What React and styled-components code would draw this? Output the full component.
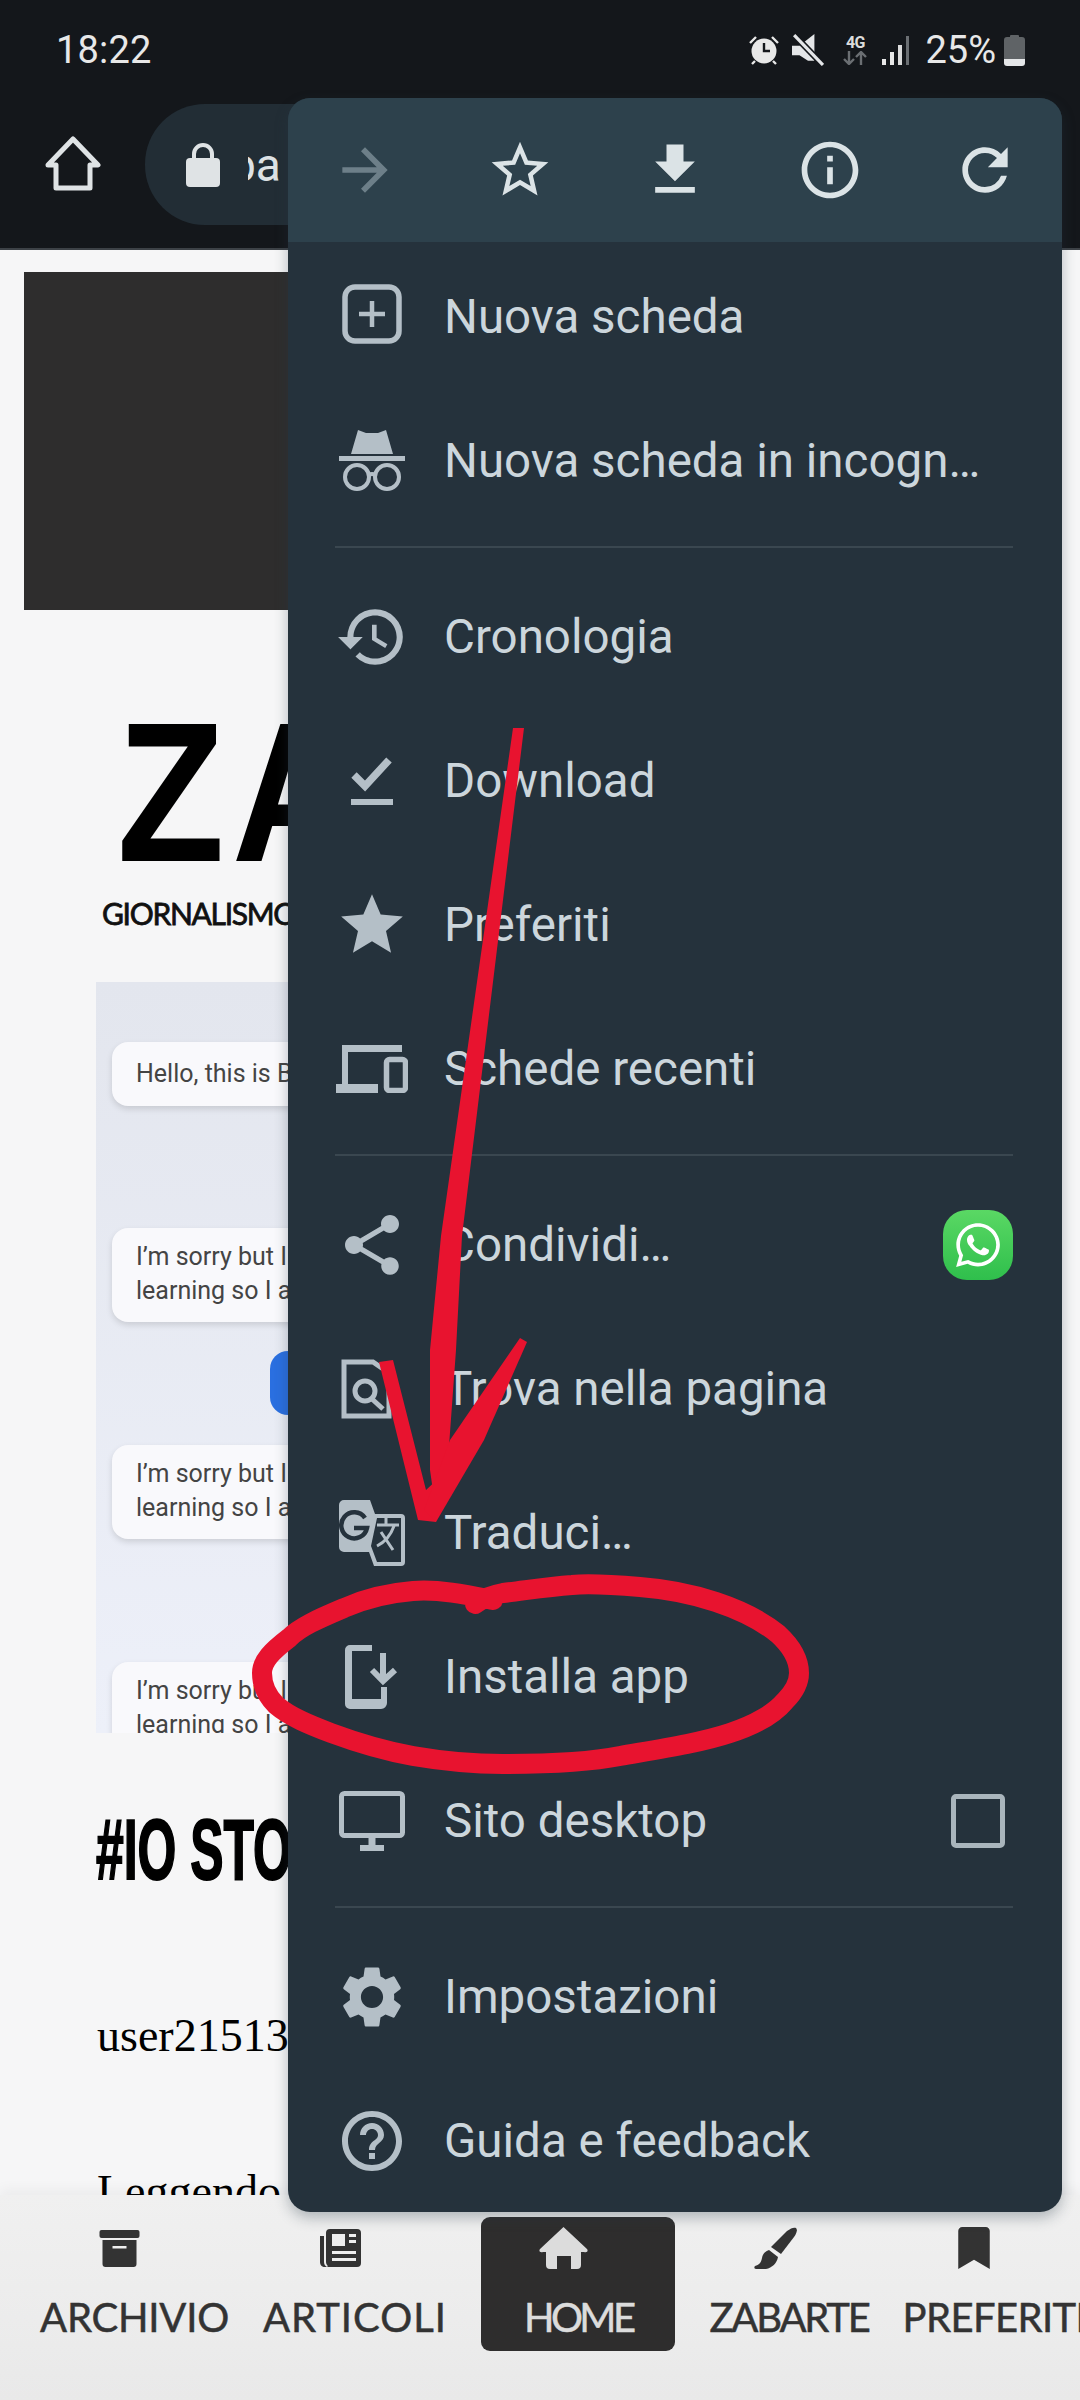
import React from "react";
import styled, { createGlobalStyle } from "styled-components";
import {
  MdArrowForward, MdStarBorder, MdFileDownload, MdInfoOutline, MdRefresh, MdHistory,
  MdStar, MdShare, MdSettings, MdHelpOutline,
} from "react-icons/md";
import { FaBookmark, FaWhatsapp } from "react-icons/fa";

const Global = createGlobalStyle`
  html, body { margin: 0; padding: 0; background: #f6f6f7; }
  * { box-sizing: border-box; }
`;

const Screen = styled.div`
  position: relative; width: 1080px; height: 2400px; overflow: hidden;
  display: flex; flex-direction: column; font-family: Roboto, "Liberation Sans", sans-serif;
`;
const TopBar = styled.header`
  height: 250px; flex: none; background: #14171b; border-bottom: 2px solid #3d4247;
`;
const StatusBar = styled.div`
  height: 100px; padding: 28px 55px 0 56px; display: flex; align-items: flex-start; color: #e8e8e8;
`;
const Time = styled.span`font-size: 38px; line-height: 44px; font-weight: 400; letter-spacing: 0.2px;`;
const StatusIcons = styled.div`margin-left: auto; display: flex; align-items: center; height: 44px;`;
const NetworkBlock = styled.div`
  width: 26px; margin: 0 14px 0 18px; display: flex; flex-direction: column; align-items: center;
  font-size: 16px; line-height: 16px; font-weight: 700; letter-spacing: -0.5px; color: #dcdcdc;
`;
const Percent = styled.span`font-size: 38px; line-height: 44px; font-weight: 400; margin: 0 8px 0 16px;`;
const Toolbar = styled.div`
  height: 148px; padding: 4px 0 0 45px; display: flex; align-items: flex-start;
`;
const HomeButton = styled.div`width: 56px; margin-top: 32px; height: 56px; color: #dfe3e5;`;
const Omnibox = styled.div`
  margin-left: 44px; width: 400px; height: 121px; border-radius: 60px; background: #222d35;
  display: flex; align-items: center; padding-left: 41px; color: #dde2e5;
`;
const OmniText = styled.div`
  margin-left: 28px; width: 60px; overflow: hidden; font-size: 46px; text-indent: -18px; white-space: nowrap;
`;

const Content = styled.main`flex: 1; min-height: 0; overflow: hidden; background: #f6f6f7;`;
const Banner = styled.div`height: 338px; margin: 22px 24px 0; background: #2e2d2d;`;
const Logo = styled.div`
  margin: 112px 0 0 117px; font: 700 198px/142px "Liberation Sans", sans-serif; color: #000; letter-spacing: 8px;
  transform: scaleX(0.89); transform-origin: left; white-space: nowrap;
`;
const Tagline = styled.div`
  margin: 37px 0 0 102px; font: 400 30px/24px Lato, sans-serif; letter-spacing: -1.3px; color: #111; white-space: nowrap;
  -webkit-text-stroke: 0.8px #111;
`;
const ChatShot = styled.div`
  margin: 57px 0 0 96px; width: 900px; height: 751px; background: linear-gradient(180deg, #e3e6ee 0%, #edf0f9 100%);
  padding: 60px 0 0 16px; overflow: hidden; display: flex; flex-direction: column; align-items: flex-start;
`;
const Bubble = styled.div`
  width: 500px; background: #f9f9fc; border-radius: 16px; box-shadow: 0 3px 6px rgba(0,0,0,.13);
  padding: ${p => (p.$two ? "12px 24px 14px" : "15px 24px")}; margin-top: ${p => p.$gap}px;
  font: 400 25px/34px Roboto, sans-serif; color: #444; flex: none; white-space: nowrap;
`;
const BlueButton = styled.div`
  flex: none; margin: 29px 0 0 158px; width: 200px; height: 64px; border-radius: 18px; background: #2a6fe0;
`;
const Headline = styled.h1`
  margin: 85px 0 0 96px; font: 900 86px/62px "Liberation Sans", sans-serif; color: #000; white-space: nowrap;
  transform: scaleX(0.58); transform-origin: left; -webkit-text-stroke: 2px #000;
`;
const Byline = styled.div`
  margin: 130px 0 0 97px; font: 400 46px/52px "Liberation Serif", serif; color: #000; white-space: nowrap;
`;
const Paragraph = styled(Byline)`margin-top: 104px;`;

const BottomNav = styled.nav`
  flex: none; height: 205px; padding: 22px 0 0 40px; display: flex; align-items: flex-start; gap: 34px; overflow: hidden;
  background: linear-gradient(180deg, #f0f0f0 0%, #ececec 60%, #e9e9e9 100%);
  box-shadow: 0 -6px 12px rgba(0,0,0,.045); position: relative;
`;
const NavItem = styled.div`
  flex: none; height: 134px; border-radius: 9px; display: flex; flex-direction: column; align-items: center;
  padding: ${p => (p.$active ? "9px 43px 0" : "9px 0 0")};
  background: ${p => (p.$active ? "#2e2d2d" : "transparent")};
  color: ${p => (p.$active ? "#dcdcdc" : "#333")};
`;
const NavIcon = styled.div`height: 44px; margin-right: ${p => p.$offset}px; display: flex; align-items: center; font-size: 42px;`;
const NavLabel = styled.div`
  margin-top: 27px; font: 400 40px/40px Lato, sans-serif; letter-spacing: ${p => p.$spacing}px; -webkit-text-stroke: 0.5px currentColor;
`;

const Menu = styled.aside`
  position: absolute; left: 288px; top: 98px; width: 774px; height: 2114px; border-radius: 22px; overflow: hidden;
  background: #25323c; box-shadow: 0 6px 14px rgba(40,60,70,.32); color: #ccd6dc;
`;
const MenuToolbar = styled.div`height: 144px; background: #2d414c; display: flex; margin-bottom: 3px;`;
const ToolButton = styled.div`
  flex: 1; display: flex; align-items: center; justify-content: center; color: ${p => (p.$off ? "#6d7f89" : "#dbe3e6")};
  font-size: 68px;
`;
const Row = styled.div`height: 144px; padding: 0 49px 0 47px; display: flex; align-items: center;`;
const RowIcon = styled.div`
  width: 74px; height: 74px; flex: none; display: flex; align-items: center; justify-content: center;
  color: #b4bfc7; font-size: ${p => p.$size || 72}px;
`;
const RowLabel = styled.div`margin-left: 35px; padding-bottom: 1px; font-size: 47.5px; line-height: 54px; color: #ccd6dc; white-space: nowrap;`;
const Trailing = styled.div`margin-left: auto; display: flex;`;
const Divider = styled.div`height: 2px; margin: 13px 49px 17px 47px; background: #3a4750;`;
const WhatsApp = styled.div`
  width: 70px; height: 70px; border-radius: 24px; background: linear-gradient(180deg, #5ad864, #2fbf4c);
  display: flex; align-items: center; justify-content: center; color: #fff; font-size: 50px;
`;
const CheckBox = styled.div`
  width: 54px; height: 54px; margin-right: 8px; border: 5px solid #a9b5bc; border-radius: 5px;
`;
const Annotation = styled.svg`position: absolute; inset: 0; width: 1080px; height: 2400px; pointer-events: none;`;

const HouseOutline = () => (
  <svg viewBox="0 0 56 56" width="56" height="56" fill="none" stroke="currentColor" strokeWidth="5" strokeLinejoin="round">
    <path d="M28 3 L53 29 H45 V52 H11 V29 H3 Z" />
  </svg>
);
const Lock = () => (
  <svg viewBox="0 0 34 44" width="34" height="44" fill="#dfe3e5">
    <rect x="0" y="15" width="34" height="29" rx="4" />
    <path d="M8 17 V11 a9 9 0 0 1 18 0 V17" fill="none" stroke="#dfe3e5" strokeWidth="4" />
  </svg>
);
const AlarmIcon = () => (
  <svg viewBox="0 0 32 30" width="32" height="30" fill="#e8e8e8">
    <circle cx="16" cy="16" r="12.5" />
    <path d="M2 8 L8 2 M30 8 L24 2 M7 26 L4 29 M25 26 L28 29" stroke="#e8e8e8" strokeWidth="2.4" />
    <path d="M16 8 V16 H22" fill="none" stroke="#14171b" strokeWidth="2.4" />
  </svg>
);
const MuteIcon = () => (
  <svg viewBox="0 0 30 30" width="32" height="32" fill="#e4e6e8" style={{ marginLeft: 12 }}>
    <path d="M0 11 H7 L21 0 V25 H15 L7 20 H0 Z" />
    <path d="M2 1 L29 29" stroke="#14171b" strokeWidth="6" />
    <path d="M2 1 L29 29" stroke="#e4e6e8" strokeWidth="3" />
  </svg>
);
const NetArrows = () => (
  <svg viewBox="0 0 26 14" width="26" height="14" fill="none" stroke="#6b6f73" strokeWidth="2.4">
    <path d="M7 0 V13 M2 8 L7 13 L12 8 M19 14 V1 M14 6 L19 1 L24 6" />
  </svg>
);
const Signal = () => (
  <svg viewBox="0 0 27 29" width="27" height="29">
    <rect x="0" y="23" width="4" height="6" fill="#e8e8e8" />
    <rect x="8" y="16" width="4" height="13" fill="#e8e8e8" />
    <rect x="16" y="9" width="4" height="20" fill="#dcdcdc" />
    <rect x="24" y="0" width="3" height="29" fill="#6b6f73" />
  </svg>
);
const Battery = () => (
  <svg viewBox="0 0 21 32" width="21" height="32">
    <path d="M6 2 a1 1 0 0 1 1 -1 H14 a1 1 0 0 1 1 1 V3 H18 a3 3 0 0 1 3 3 V25 H0 V6 a3 3 0 0 1 3 -3 H6 Z" fill="#5f6366" />
    <path d="M0 25 H21 V29 a3 3 0 0 1 -3 3 H3 a3 3 0 0 1 -3 -3 Z" fill="#e4e6e8" />
  </svg>
);
const NewTabIcon = () => (
  <svg viewBox="0 3 60 60" width="60" height="60" fill="none" stroke="currentColor" overflow="visible">
    <rect x="3" y="3" width="54" height="54" rx="10" strokeWidth="5.5" />
    <path d="M30 17 V43 M17 30 H43" strokeWidth="4.5" />
  </svg>
);
const IncognitoIcon = () => (
  <svg viewBox="0 0 66 62" width="66" height="62" fill="currentColor">
    <path d="M19 0 L27 3 H39 L47 0 L54 24 H12 Z" />
    <rect x="0" y="26" width="66" height="5" />
    <g fill="none" stroke="currentColor" strokeWidth="4">
      <circle cx="18" cy="47" r="12" />
      <circle cx="48" cy="47" r="12" />
      <path d="M30 45 Q33 43 36 45" />
    </g>
  </svg>
);
const DownloadDoneIcon = () => (
  <svg viewBox="0 0 42 48" width="42" height="48" fill="none" stroke="currentColor">
    <path d="M3 18 L14 29 L38 3" strokeWidth="7.5" />
    <rect x="0" y="42" width="42" height="6" fill="currentColor" stroke="none" />
  </svg>
);
const RecentIcon = () => (
  <svg viewBox="0 0 72 48" width="72" height="48" fill="currentColor">
    <path d="M6 0 H66 V7 H12 V39 H42 V48 H0 V39 H6 Z" />
    <rect x="50.5" y="14.5" width="19" height="31" rx="3" fill="none" stroke="currentColor" strokeWidth="5.5" />
  </svg>
);
const FindIcon = () => (
  <svg viewBox="0 0 62 60" width="62" height="60" fill="none" stroke="currentColor" strokeWidth="5">
    <path d="M3 3 H32 L48 14 V57 H3 Z" />
    <circle cx="24" cy="32" r="10" />
    <path d="M31 40 L42 50" />
  </svg>
);
const TranslateIcon = () => (
  <svg viewBox="0 0 66 66" width="66" height="66">
    <path d="M5 0 H31 L36 14 H62 a4 4 0 0 1 4 4 V62 a4 4 0 0 1 -4 4 H35 L30 52 H5 a5 5 0 0 1 -5 -5 V5 a5 5 0 0 1 5 -5 Z" fill="#b4bfc7" />
    <path d="M38 18 H62 V62 H38 L32 46 Z" fill="#25323c" />
    <path d="M26 18 A13 13 0 1 0 28 28 H15" fill="none" stroke="#25323c" strokeWidth="4.5" />
    <path d="M38 25 H60 M47 18 V25 M55 26 Q50 40 38 46 M42 32 L54 50" fill="none" stroke="#b4bfc7" strokeWidth="3" />
  </svg>
);
const InstallIcon = () => (
  <svg viewBox="0 0 54 64" width="54" height="64" fill="currentColor">
    <path d="M5 0 H27 V6 H7 V54 H36 V42 H42 V58 a6 6 0 0 1 -6 6 H5 a5 5 0 0 1 -5 -5 V5 a5 5 0 0 1 5 -5 Z" />
    <path d="M38 8 V34 M27 25 L38 36 L50 25" fill="none" stroke="currentColor" strokeWidth="6" />
  </svg>
);
const DesktopIcon = () => (
  <svg viewBox="0 0 66 60" width="66" height="60" fill="none" stroke="currentColor">
    <rect x="2.5" y="2.5" width="61" height="42" rx="3" strokeWidth="5" />
    <path d="M33 46 V55" strokeWidth="7" />
    <path d="M21 57 H45" strokeWidth="6" />
  </svg>
);
const ArchiveIcon = () => (
  <svg viewBox="0 0 40 37" width="41" height="37" fill="currentColor" fillRule="evenodd">
    <rect x="0" y="0" width="40" height="8" rx="2" />
    <path d="M3 10 H37 V34 a3 3 0 0 1 -3 3 H6 a3 3 0 0 1 -3 -3 Z M13 16 V18.5 H27 V16 Z" />
  </svg>
);
const NewspaperIcon = () => (
  <svg viewBox="0 0 41 38" width="41" height="38" fill="currentColor" fillRule="evenodd">
    <path d="M10 0 H37 a4 4 0 0 1 4 4 V34 a4 4 0 0 1 -4 4 H7 C9 37 6 36 6 33 V4 a4 4 0 0 1 4 -4 Z M12 5 V17 H25 V5 Z M29 5 V8 H36 V5 Z M29 11 V14 H36 V11 Z M12 22 V25 H36 V22 Z M12 29 V32 H36 V29 Z" />
    <path d="M0 7 H4 V33 C4 35 5 37 7 38 H5 C2 38 0 36 0 33 Z" />
  </svg>
);
const HomeSolidIcon = () => (
  <svg viewBox="0 0 49 42" width="49" height="42" fill="currentColor">
    <path d="M24.5 0 L48 22 C49.5 24 48 26 45 25 H42 V38 a4 4 0 0 1 -4 4 H32 V29 H18 V42 H11 a4 4 0 0 1 -4 -4 V25 H4 C1 26 -0.5 24 1 22 Z" />
  </svg>
);
const BrushIcon = () => (
  <svg viewBox="0 0 43 42" width="43" height="42" fill="currentColor">
    <path d="M42 1 C44 3 42 7 40 10 L27 27 L17 20 L33 4 C37 1 40 0 42 1 Z" />
    <path d="M15 23 L24 30 C23 36 18 41 12 42 H2 C0 42 0 40 1 39 C5 38 7 36 8 31 C9 26 12 24 15 23 Z" />
  </svg>
);

const navItems = [
  { label: "ARCHIVIO", Icon: ArchiveIcon, spacing: -0.2, offset: 30 },
  { label: "ARTICOLI", Icon: NewspaperIcon, spacing: 1, offset: 30 },
  { label: "HOME", Icon: HomeSolidIcon, spacing: -3.6, offset: 30, active: true },
  { label: "ZABARTE", Icon: BrushIcon, spacing: -2.2, offset: 26 },
  { label: "PREFERITI", Icon: FaBookmark, spacing: -0.6, offset: 40 },
];

const Item = ({ icon, size, label, children }) => (
  <Row>
    <RowIcon $size={size}>{icon}</RowIcon>
    <RowLabel>{label}</RowLabel>
    {children && <Trailing>{children}</Trailing>}
  </Row>
);

export default function App() {
  return (
    <Screen>
      <Global />
      <TopBar>
        <StatusBar>
          <Time>18:22</Time>
          <StatusIcons>
            <AlarmIcon />
            <MuteIcon />
            <NetworkBlock>4G<NetArrows /></NetworkBlock>
            <Signal />
            <Percent>25%</Percent>
            <Battery />
          </StatusIcons>
        </StatusBar>
        <Toolbar>
          <HomeButton><HouseOutline /></HomeButton>
          <Omnibox>
            <Lock />
            <OmniText>pa</OmniText>
          </Omnibox>
        </Toolbar>
      </TopBar>
      <Content>
        <Banner />
        <Logo>ZABARTE</Logo>
        <Tagline>GIORNALISMO E ARTE</Tagline>
        <ChatShot>
          <Bubble $gap={0}>Hello, this is Bing.</Bubble>
          <Bubble $gap={122} $two>I’m sorry but I prefer not<br />learning so I appreciate</Bubble>
          <BlueButton />
          <Bubble $gap={30} $two>I’m sorry but I prefer not<br />learning so I appreciate</Bubble>
          <Bubble $gap={123} $two>I’m sorry but I prefer not<br />learning so I appreciate</Bubble>
        </ChatShot>
        <Headline>#IO STO</Headline>
        <Byline>user21513</Byline>
        <Paragraph>Leggendo</Paragraph>
      </Content>
      <BottomNav>
        {navItems.map(({ label, Icon, spacing, offset, active }) => (
          <NavItem key={label} $active={active}>
            <NavIcon $offset={offset}><Icon /></NavIcon>
            <NavLabel $spacing={spacing}>{label}</NavLabel>
          </NavItem>
        ))}
      </BottomNav>
      <Menu>
        <MenuToolbar>
          <ToolButton $off><MdArrowForward /></ToolButton>
          <ToolButton><MdStarBorder /></ToolButton>
          <ToolButton><MdFileDownload /></ToolButton>
          <ToolButton><MdInfoOutline /></ToolButton>
          <ToolButton><MdRefresh /></ToolButton>
        </MenuToolbar>
        <Item icon={<NewTabIcon />} label="Nuova scheda" />
        <Item icon={<IncognitoIcon />} label="Nuova scheda in incogn…" />
        <Divider />
        <Item icon={<MdHistory />} size={80} label="Cronologia" />
        <Item icon={<DownloadDoneIcon />} label="Download" />
        <Item icon={<MdStar />} size={76} label="Preferiti" />
        <Item icon={<RecentIcon />} label="Schede recenti" />
        <Divider />
        <Item icon={<MdShare />} size={72} label="Condividi…">
          <WhatsApp><FaWhatsapp /></WhatsApp>
        </Item>
        <Item icon={<FindIcon />} label="Trova nella pagina" />
        <Item icon={<TranslateIcon />} label="Traduci…" />
        <Item icon={<InstallIcon />} label="Installa app" />
        <Item icon={<DesktopIcon />} label="Sito desktop">
          <CheckBox />
        </Item>
        <Divider />
        <Item icon={<MdSettings />} size={76} label="Impostazioni" />
        <Item icon={<MdHelpOutline />} size={72} label="Guida e feedback" />
      </Menu>
      <Annotation viewBox="0 0 1080 2400">
        <g fill="#e8132f">
          <path d="M513 728 L524 728 L462 1236 L456 1350 L448 1460 L436 1512 L430 1470 L430 1350 L441 1236 Z" />
          <path d="M379 1362 L393 1360 L426 1490 L441 1476 L436 1522 L418 1520 Z" />
          <path d="M520 1338 L527 1342 L484 1440 L436 1522 L424 1510 L450 1440 Z" />
        </g>
        <path
          transform="translate(0 3)"
          d="M493 1597 C468 1592 440 1586 413 1588 C388 1590 364 1596 344 1605 C318 1616 300 1624 289 1635 C272 1648 262 1658 262 1670 C262 1684 268 1694 276 1702 C290 1714 310 1722 331 1730 C358 1740 385 1748 413 1753 C442 1758 472 1761 503 1761 C545 1761 585 1760 620 1753 C660 1746 700 1740 730 1730 C755 1722 775 1710 785 1698 C795 1688 799 1680 799 1670 C799 1655 790 1642 778 1631 C762 1618 740 1607 716 1599 C692 1591 666 1586 640 1584 C616 1582 592 1580 572 1582 C545 1584 522 1588 503 1590 C492 1592 482 1596 475 1601"
          fill="none" stroke="#e8132f" strokeWidth="20" strokeLinecap="round"
        />
      </Annotation>
    </Screen>
  );
}
